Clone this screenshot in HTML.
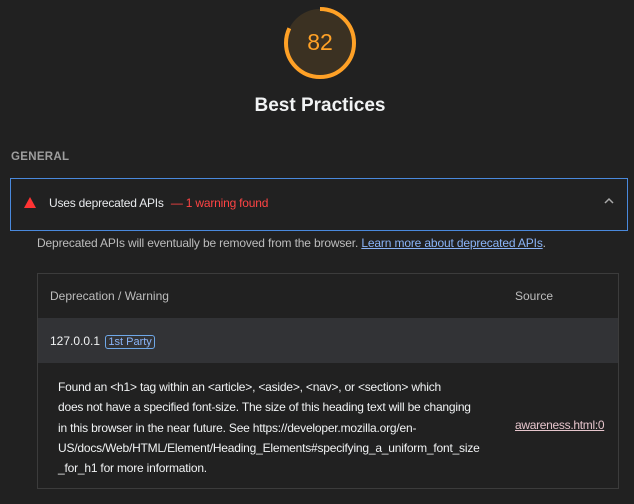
<!DOCTYPE html>
<html><head><style>
body{margin:0;width:634px;height:504px;background:#212121;font-family:"Liberation Sans",sans-serif;color:#e8eaed;overflow:hidden;position:relative}
.a{position:absolute;white-space:nowrap}
</style></head><body>
<svg class="a" style="left:282px;top:5px" width="76" height="76" viewBox="0 0 76 76">
<circle cx="38" cy="38" r="34" fill="#3b3122"/>
<circle cx="38" cy="38" r="34" fill="none" stroke="#ffa126" stroke-width="4" stroke-dasharray="175.2 213.6" transform="rotate(-90 38 38)"/>
</svg>
<div class="a" style="left:282px;top:29px;width:76px;text-align:center;font-size:23px;color:#ffa126">82</div>
<div class="a" style="left:0;top:95px;width:640px;text-align:center;font-size:19px;font-weight:bold;color:#f1f3f4">Best Practices</div>
<div class="a" style="left:11px;top:151px;font-size:11.5px;font-weight:bold;color:#9e9e9e;letter-spacing:0.3px">GENERAL</div>
<div class="a" style="left:10px;top:178px;width:616px;height:51px;border:1px solid #4a89dc"></div>
<svg class="a" style="left:24px;top:197px" width="12" height="11"><polygon points="6,0 12,11 0,11" fill="#f33"/></svg>
<div class="a" style="left:49px;top:196px;font-size:12px;color:#e8eaed;letter-spacing:-0.2px">Uses deprecated APIs <span style="color:#f44;margin-left:4px">— 1 warning found</span></div>
<svg class="a" style="left:604px;top:197px" width="10" height="8"><polyline points="1,6 5,2 9,6" fill="none" stroke="#aaa" stroke-width="1.5"/></svg>
<div class="a" style="left:37px;top:236px;font-size:12px;color:#bdbdbd;letter-spacing:-0.15px">Deprecated APIs will eventually be removed from the browser. <span style="color:#8ab4f8;text-decoration:underline">Learn more about deprecated APIs</span>.</div>
<div class="a" style="left:37px;top:273px;width:580px;height:214px;border:1px solid #3c3c3c"></div>
<div class="a" style="left:38px;top:318px;width:580px;height:45px;background:#323336"></div>
<div class="a" style="left:50px;top:289px;font-size:12px;color:#bdbdbd">Deprecation / Warning</div>
<div class="a" style="left:515px;top:289px;font-size:12px;color:#bdbdbd">Source</div>
<div class="a" style="left:50px;top:334px;font-size:12px;color:#f1f3f4">127.0.0.1 <span style="display:inline-block;border:1px solid #6fa8e8;border-radius:3px;color:#8ab4f8;padding:0 2px;font-size:11px;margin-left:2px">1st Party</span></div>
<div class="a" style="left:58px;top:377px;font-size:12px;line-height:20.3px;color:#f1f3f4;letter-spacing:-0.2px">Found an &lt;h1&gt; tag within an &lt;article&gt;, &lt;aside&gt;, &lt;nav&gt;, or &lt;section&gt; which<br>does not have a specified font-size. The size of this heading text will be changing<br>in this browser in the near future. See https://developer.mozilla.org/en-<br>US/docs/Web/HTML/Element/Heading_Elements#specifying_a_uniform_font_size<br>_for_h1 for more information.</div>
<div class="a" style="left:515px;top:418px;font-size:12px;color:#e6c5cc;text-decoration:underline;letter-spacing:-0.3px">awareness.html:0</div>
</body></html>
